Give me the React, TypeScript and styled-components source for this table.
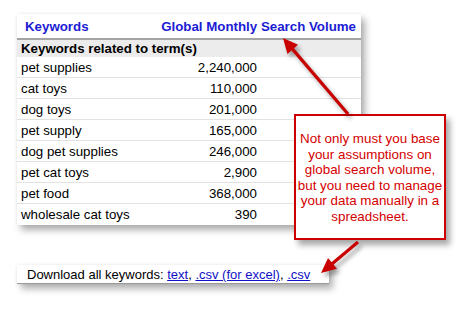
import React from "react";
import styled, { createGlobalStyle } from "styled-components";

const Global = createGlobalStyle`
  html, body { margin: 0; padding: 0; background: #ffffff; }
  body { font-family: Arial, "Liberation Sans", sans-serif; font-size: 13.3px; color: #000; }
`;

const Canvas = styled.div`
  position: relative;
  width: 464px;
  height: 321px;
  padding: 14px 0 0 17px;
  box-sizing: border-box;
  display: flex;
  flex-direction: column;
  gap: 40px;
`;

const Panel = styled.div`
  width: 344px;
  background: #fff;
  box-shadow: 4px 5px 7px rgba(0, 0, 0, 0.32), 0 0 3px rgba(0, 0, 0, 0.08);
`;

const HeaderRow = styled.div`
  display: flex;
  justify-content: space-between;
  align-items: center;
  height: 23px;
  padding: 1px 5px 0 8px;
  border-bottom: 2px solid #a3a3a3;
  color: #1c1cd4;
  font-weight: bold;
`;

const GroupRow = styled.div`
  height: 17px;
  line-height: 18px;
  padding-left: 4px;
  background: #ececec;
  font-weight: bold;
`;

const Row = styled.div`
  display: grid;
  grid-template-columns: 170px 70px 1fr;
  height: 20px;
  line-height: 21px;
  border-bottom: 1px solid #e2e2e2;
  &:last-child { border-bottom: none; height: 21px; }
`;

const KeywordCell = styled.span`
  padding-left: 4px;
`;

const VolumeCell = styled.span`
  text-align: right;
`;

const DownloadBar = styled.div`
  width: 312px;
  height: 19px;
  line-height: 19px;
  padding-left: 10px;
  box-sizing: border-box;
  background: #fff;
  font-size: 13px;
  border-bottom: 1px solid #9a9a9a;
  box-shadow: 4px 5px 7px rgba(0, 0, 0, 0.3), 0 0 3px rgba(0, 0, 0, 0.08);
`;

const Link = styled.a`
  color: #1010c8;
  text-decoration: underline;
`;

const Callout = styled.div`
  position: absolute;
  left: 294px;
  top: 114px;
  width: 152px;
  height: 126px;
  box-sizing: border-box;
  border: 2px solid #cc0000;
  background: #fff;
  padding-top: 15px;
  color: #d40000;
  text-align: center;
  font-size: 13.4px;
  line-height: 15.6px;
  box-shadow: 4px 5px 6px rgba(0, 0, 0, 0.35);
`;

const Arrows = styled.svg`
  position: absolute;
  left: 0;
  top: 0;
  pointer-events: none;
  filter: drop-shadow(3px 4px 2px rgba(0, 0, 0, 0.35));
`;

const rows: [string, string][] = [
  ["pet supplies", "2,240,000"],
  ["cat toys", "110,000"],
  ["dog toys", "201,000"],
  ["pet supply", "165,000"],
  ["dog pet supplies", "246,000"],
  ["pet cat toys", "2,900"],
  ["pet food", "368,000"],
  ["wholesale cat toys", "390"],
];

// Straight arrow with a filled triangular head at (x2, y2)
function Arrow({ x1, y1, x2, y2 }: { x1: number; y1: number; x2: number; y2: number }) {
  const dx = x2 - x1;
  const dy = y2 - y1;
  const len = Math.hypot(dx, dy);
  const ux = dx / len;
  const uy = dy / len;
  const head = 15;
  const half = 7;
  const bx = x2 - ux * head;
  const by = y2 - uy * head;
  const px = -uy * half;
  const py = ux * half;
  return (
    <g>
      <line x1={x1} y1={y1} x2={bx + ux * 2} y2={by + uy * 2} stroke="#c80000" strokeWidth={3.2} />
      <polygon points={`${x2},${y2} ${bx + px},${by + py} ${bx - px},${by - py}`} fill="#c80000" />
    </g>
  );
}

export default function App() {
  return (
    <>
      <Global />
      <Canvas>
        <Panel>
          <HeaderRow>
            <span>Keywords</span>
            <span>Global Monthly Search Volume</span>
          </HeaderRow>
          <GroupRow>Keywords related to term(s)</GroupRow>
          {rows.map(([k, v]) => (
            <Row key={k}>
              <KeywordCell>{k}</KeywordCell>
              <VolumeCell>{v}</VolumeCell>
              <span />
            </Row>
          ))}
        </Panel>
        <DownloadBar>
          Download all keywords: <Link href="#">text</Link>, <Link href="#">.csv (for excel)</Link>,{" "}
          <Link href="#">.csv</Link>
        </DownloadBar>
        <Callout>
          Not only must you base
          <br />
          your assumptions on
          <br />
          global search volume,
          <br />
          but you need to manage
          <br />
          your data manually in a
          <br />
          spreadsheet.
        </Callout>
        <Arrows width={464} height={321} viewBox="0 0 464 321">
          <Arrow x1={348} y1={114} x2={283} y2={38} />
          <Arrow x1={358} y1={242} x2={321} y2={273} />
        </Arrows>
      </Canvas>
    </>
  );
}
